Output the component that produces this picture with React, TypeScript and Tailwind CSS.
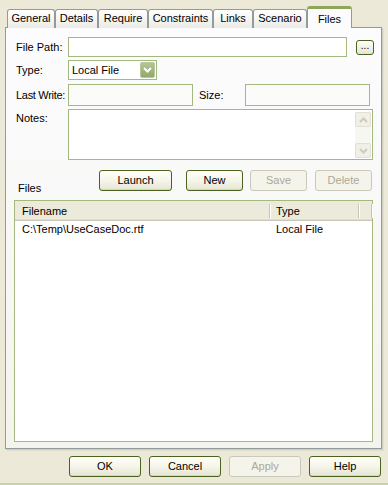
import React from "react";

const tabs = [
  { label: "General", w: 48 },
  { label: "Details", w: 43 },
  { label: "Require", w: 50 },
  { label: "Constraints", w: 65 },
  { label: "Links", w: 40 },
  { label: "Scenario", w: 54 },
];

function XpButton({ label, w, disabled }: { label: string; w: number; disabled?: boolean }) {
  return (
    <div
      style={{ width: w }}
      className={
        disabled
          ? "flex h-[21px] items-center justify-center rounded-[3px] border border-[#cac8bb] bg-[#f5f4ea] text-[#aca899]"
          : "flex h-[21px] items-center justify-center rounded-[3px] border border-[#4a6420] bg-gradient-to-b from-[#fffff8] via-[#f6f5ea] to-[#e6e4d3] text-black shadow-[inset_0_-1px_0_#d8d5bf,inset_0_1px_0_#ffffff]"
      }
    >
      {label}
    </div>
  );
}

function Chevron({ up, color }: { up?: boolean; color: string }) {
  return (
    <svg width="9" height="6" viewBox="0 0 9 6">
      <path
        d={up ? "M1 5 L4.5 1.5 L8 5" : "M1 1 L4.5 4.5 L8 1"}
        fill="none"
        stroke={color}
        strokeWidth="2"
      />
    </svg>
  );
}

export default function App() {
  return (
    <div className="flex h-[485px] w-[388px] flex-col overflow-hidden whitespace-nowrap border-b-2 border-[#c5d6a6] bg-[#ece9d8] font-['Liberation_Sans',sans-serif] text-[11px] leading-none text-black">
      {/* tab strip */}
      <div className="relative z-10 flex h-[27px] items-end pl-[7px]">
        {tabs.map((t) => (
          <div
            key={t.label}
            style={{ width: t.w }}
            className="-mb-[1px] flex h-[19px] items-center justify-center rounded-t-[3px] border border-b-0 border-[#919b9c] bg-gradient-to-b from-white to-[#ecebe5] pb-[1px]"
          >
            {t.label}
          </div>
        ))}
        <div className="-mb-[1px] flex h-[22px] w-[45px] items-start justify-center rounded-t-[3px] border-x border-[#919b9c] border-t-[3px] border-t-[#8fa65a] bg-[#fcfcfe] pt-[5px]">
          Files
        </div>
      </div>

      {/* panel */}
      <div className="ml-[5px] flex h-[422px] w-[377px] flex-col border border-[#919b9c] bg-gradient-to-b from-[#fcfcfe] to-[#f4f3ee] pl-[10px] shadow-[1px_1px_0_#d0cebf,2px_2px_0_#e2dfce]">
        <div className="mt-[9px] flex h-[20px] items-center">
          <span className="w-[52px]">File Path:</span>
          <div className="h-[20px] w-[279px] border border-[#a4b97f] bg-white" />
          <div className="ml-[9px] flex h-[15px] w-[18px] items-center justify-center rounded-[3px] border border-[#4a6420] bg-gradient-to-b from-[#fffff8] to-[#e6e4d3] pb-[3px] text-[10px]">
            ...
          </div>
        </div>

        <div className="mt-[3px] flex h-[20px] items-center">
          <span className="w-[52px]">Type:</span>
          <div className="flex h-[20px] w-[89px] items-center justify-between border border-[#a4b97f] bg-white pl-[3px] pr-[1px]">
            <span>Local File</span>
            <div className="flex h-[16px] w-[15px] items-center justify-center rounded-[2px] border border-[#b7c69d] bg-gradient-to-b from-[#b4c594] to-[#93a86b]">
              <Chevron color="#ffffff" />
            </div>
          </div>
        </div>

        <div className="mt-[4px] flex h-[22px] items-center">
          <span className="w-[52px] tracking-[-0.3px]">Last Write:</span>
          <div className="h-[22px] w-[125px] border border-[#a4b97f] bg-[#fbfbf9]" />
          <span className="ml-[6px] w-[46px]">Size:</span>
          <div className="h-[22px] w-[125px] border border-[#a4b97f] bg-[#fbfbf9]" />
        </div>

        <div className="mt-[3px] flex h-[51px] items-start">
          <span className="mt-[4px] w-[52px]">Notes:</span>
          <div className="flex h-[51px] w-[305px] justify-end border border-[#a4b97f] bg-white pr-[1px] pt-[2px]">
            <div className="flex h-[46px] w-[16px] flex-col justify-between bg-[#f7f7f1]">
              <div className="flex h-[15px] items-center justify-center rounded-[2px] border border-[#e2e0d2] bg-[#f1f0e8]">
                <Chevron up color="#cdcbbd" />
              </div>
              <div className="flex h-[15px] items-center justify-center rounded-[2px] border border-[#e2e0d2] bg-[#f1f0e8]">
                <Chevron color="#cdcbbd" />
              </div>
            </div>
          </div>
        </div>

        <div className="mt-[10px] flex h-[21px] items-end">
          <span className="mb-[-3px] ml-[2px] w-[81px]">Files</span>
          <XpButton label="Launch" w={73} />
          <div className="w-[14px]" />
          <XpButton label="New" w={57} />
          <div className="w-[7px]" />
          <XpButton label="Save" w={57} disabled />
          <div className="w-[8px]" />
          <XpButton label="Delete" w={57} disabled />
        </div>

        {/* list */}
        <div className="-ml-[2px] mt-[9px] flex h-[242px] w-[359px] flex-col border border-[#a4b97f] bg-white">
          <div className="flex h-[20px] items-center bg-[#ebeadb] shadow-[inset_0_-1px_0_#cbc7b8,inset_0_-2px_0_#e2decd]">
            <span className="w-[254px] pl-[7px]">Filename</span>
            <div className="h-[14px] w-[1px] bg-[#c7c5b2] shadow-[1px_0_0_#ffffff]" />
            <span className="w-[88px] pl-[6px]">Type</span>
            <div className="h-[14px] w-[1px] bg-[#c7c5b2] shadow-[1px_0_0_#ffffff]" />
            <span className="w-[12px]" />
            <div className="h-[14px] w-[1px] bg-[#c7c5b2] shadow-[1px_0_0_#ffffff]" />
          </div>
          <div className="flex h-[16px] items-center">
            <span className="w-[255px] pl-[7px]">C:\Temp\UseCaseDoc.rtf</span>
            <span className="pl-[6px]">Local File</span>
          </div>
        </div>
      </div>

      {/* dialog buttons */}
      <div className="mt-[7px] flex gap-[8px] pl-[69px]">
        <XpButton label="OK" w={72} />
        <XpButton label="Cancel" w={72} />
        <XpButton label="Apply" w={72} disabled />
        <XpButton label="Help" w={72} />
      </div>
    </div>
  );
}
